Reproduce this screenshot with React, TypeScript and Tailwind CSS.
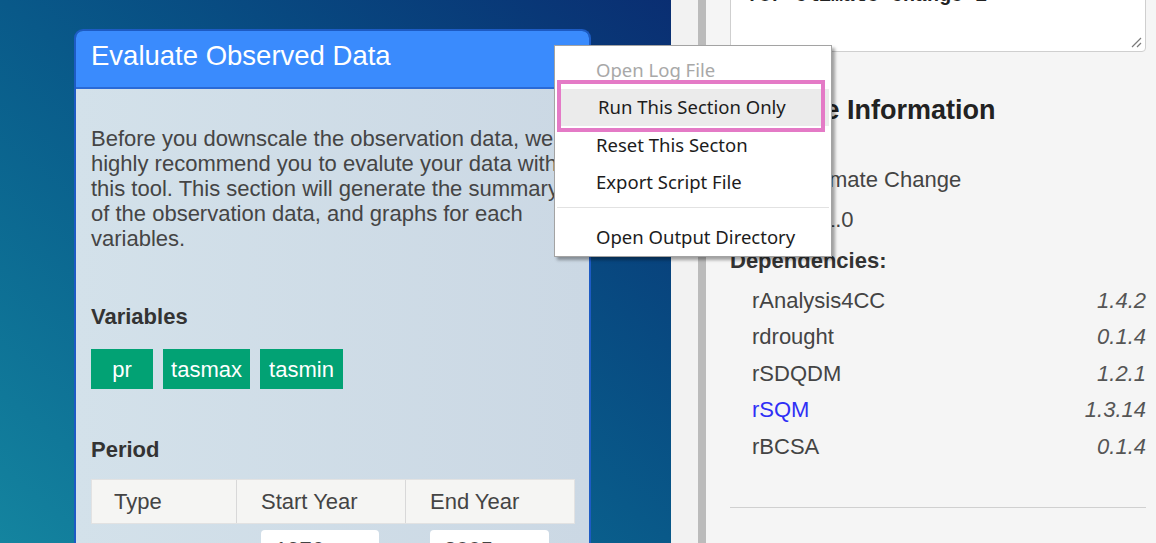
import React from 'react';

const deps = [
  { name: 'rAnalysis4CC', version: '1.4.2' },
  { name: 'rdrought', version: '0.1.4' },
  { name: 'rSDQDM', version: '1.2.1' },
  { name: 'rSQM', version: '1.3.14', link: true },
  { name: 'rBCSA', version: '0.1.4' },
];

const variables = [
  { name: 'pr', w: 'w-[62px]' },
  { name: 'tasmax', w: 'w-[87px]' },
  { name: 'tasmin', w: 'w-[83px]' },
];

function ContextMenu() {
  const item = 'h-[37.5px] flex items-center pl-[41px] whitespace-nowrap';
  return (
    <div className="absolute left-[554px] top-[45px] w-[278px] h-[212px] bg-white border border-[#a3a3a3] shadow-[3px_3px_3px_rgba(0,0,0,0.35)] pt-[5px] font-['Noto_Sans'] text-[18.5px] text-[#1c1c1c]">
      <div className={item + ' text-[#a8a8a8]'}>Open Log File</div>
      <div className={item + ' bg-[#ebebeb] mx-[2px] pl-[39px]'}>Run This Section Only</div>
      <div className={item}>Reset This Secton</div>
      <div className={item}>Export Script File</div>
      <div className="mx-[2px] mt-[6px] mb-[10px] h-px bg-[#e2e2e2]" />
      <div className={item}>Open Output Directory</div>
    </div>
  );
}

function ObservedCard() {
  return (
    <div className="w-[517px] rounded-t-[9px] border-2 border-b-0 border-[#1d5bc4] overflow-hidden">
      <div className="h-[58px] pb-[6px] bg-[#3a8bfd] border-b-2 border-[#2a6ad6] flex items-center pl-[15px]">
        <span className="text-white text-[27.5px] whitespace-nowrap">Evaluate Observed Data</span>
      </div>
      <div className="h-[470px] bg-linear-to-r from-[#d3e1ea] to-[#cbd8e4] px-[15px] pt-[36.5px]">
        <p className="text-[22px] leading-[25px] text-[#454545] whitespace-nowrap">
          Before you downscale the observation data, we
          <br />
          highly recommend you to evalute your data with
          <br />
          this tool. This section will generate the summary
          <br />
          of the observation data, and graphs for each
          <br />
          variables.
        </p>

        <h4 className="mt-[53px] text-[22px] leading-[25px] font-bold text-[#333]">Variables</h4>
        <div className="mt-[20.5px] flex gap-[10px]">
          {variables.map((v) => (
            <span
              key={v.name}
              className={v.w + ' h-[40px] bg-[#02a274] text-white text-[22px] flex items-center justify-center'}
            >
              {v.name}
            </span>
          ))}
        </div>

        <h4 className="mt-[47.5px] text-[22px] leading-[25px] font-bold text-[#333]">Period</h4>
        <div className="mt-[17.5px] w-[484px] text-[22px] text-[#444]">
          <div className="grid grid-cols-[145px_169px_170px] h-[45px] bg-[#f5f5f3] border border-[#e2e2e2]">
            <div className="flex items-center pl-[22px] border-r border-[#d8d8d8]">Type</div>
            <div className="flex items-center pl-[24px] border-r border-[#d8d8d8]">Start Year</div>
            <div className="flex items-center pl-[24px]">End Year</div>
          </div>
          <div className="grid grid-cols-[145px_169px_170px] h-[50px]">
            <div className="pl-[23px] pt-[12px]">Observed</div>
            <div className="pl-[25px] pt-[6px]">
              <div className="w-[118px] h-[38px] bg-white rounded-[4px] pl-[14px] flex items-center">1976</div>
            </div>
            <div className="pl-[25px] pt-[6px]">
              <div className="w-[119px] h-[38px] bg-white rounded-[4px] pl-[14px] flex items-center">2005</div>
            </div>
          </div>
        </div>
      </div>
    </div>
  );
}

function PackageInfo() {
  return (
    <div className="flex-1 bg-[#f5f5f5] pl-[24px] pr-[10px] flex flex-col">
      <div className="-mt-[30px] h-[82px] bg-white border border-[#cfcfcf] rounded-[4px] pt-[13px] pl-[16px] relative">
        <div className="font-['Liberation_Mono'] font-bold text-[20px] leading-[24px] text-[#222] whitespace-nowrap">
          for Climate Change 1
        </div>
        <svg className="absolute right-[3px] bottom-[3px]" width="12" height="12" viewBox="0 0 12 12">
          <path d="M11 2 L2 11 M11 7 L7 11" stroke="#7a7a7a" strokeWidth="1.2" />
        </svg>
      </div>

      <h3 className="mt-[42px] text-[27px] leading-[32px] font-bold text-[#222] whitespace-nowrap">Package Information</h3>

      <div className="mt-[32.75px] text-[22px] text-[#444]">
        <div className="h-[40.5px] flex items-center whitespace-nowrap">
          <b className="text-[#333]">Name:</b>&nbsp;Climate Change
        </div>
        <div className="h-[40.5px] flex items-center whitespace-nowrap">
          <b className="text-[#333]">Version:</b>&nbsp;1.0
        </div>
        <div className="h-[40.5px] flex items-center font-bold text-[#333]">Dependencies:</div>
      </div>

      <div className="mt-[1.5px] pl-[22px] text-[22px]">
        {deps.map((d) => (
          <div key={d.name} className="h-[36.5px] flex items-center justify-between">
            <span className={d.link ? 'text-[#2f2ff5]' : 'text-[#444]'}>{d.name}</span>
            <span className="italic text-[#555]">{d.version}</span>
          </div>
        ))}
      </div>

      <div className="mt-[43px] h-px bg-[#d0d0d0]" />
    </div>
  );
}

export default function App() {
  return (
    <div className="relative w-[1156px] h-[543px] overflow-hidden flex font-['Liberation_Sans']">
      <div className="w-[671px] h-full bg-linear-to-tr from-[#14849f] to-[#0a2e72] pl-[74px] pt-[29px]">
        <ObservedCard />
      </div>
      <div className="w-[27px] h-full bg-[#f2f2f2]" />
      <div className="w-[8px] h-full bg-[#bbbbbb]" />
      <PackageInfo />

      <ContextMenu />
      <div className="absolute left-[557px] top-[80px] w-[268px] h-[52px] border-[4px] border-[#e47ac6]" />
    </div>
  );
}
